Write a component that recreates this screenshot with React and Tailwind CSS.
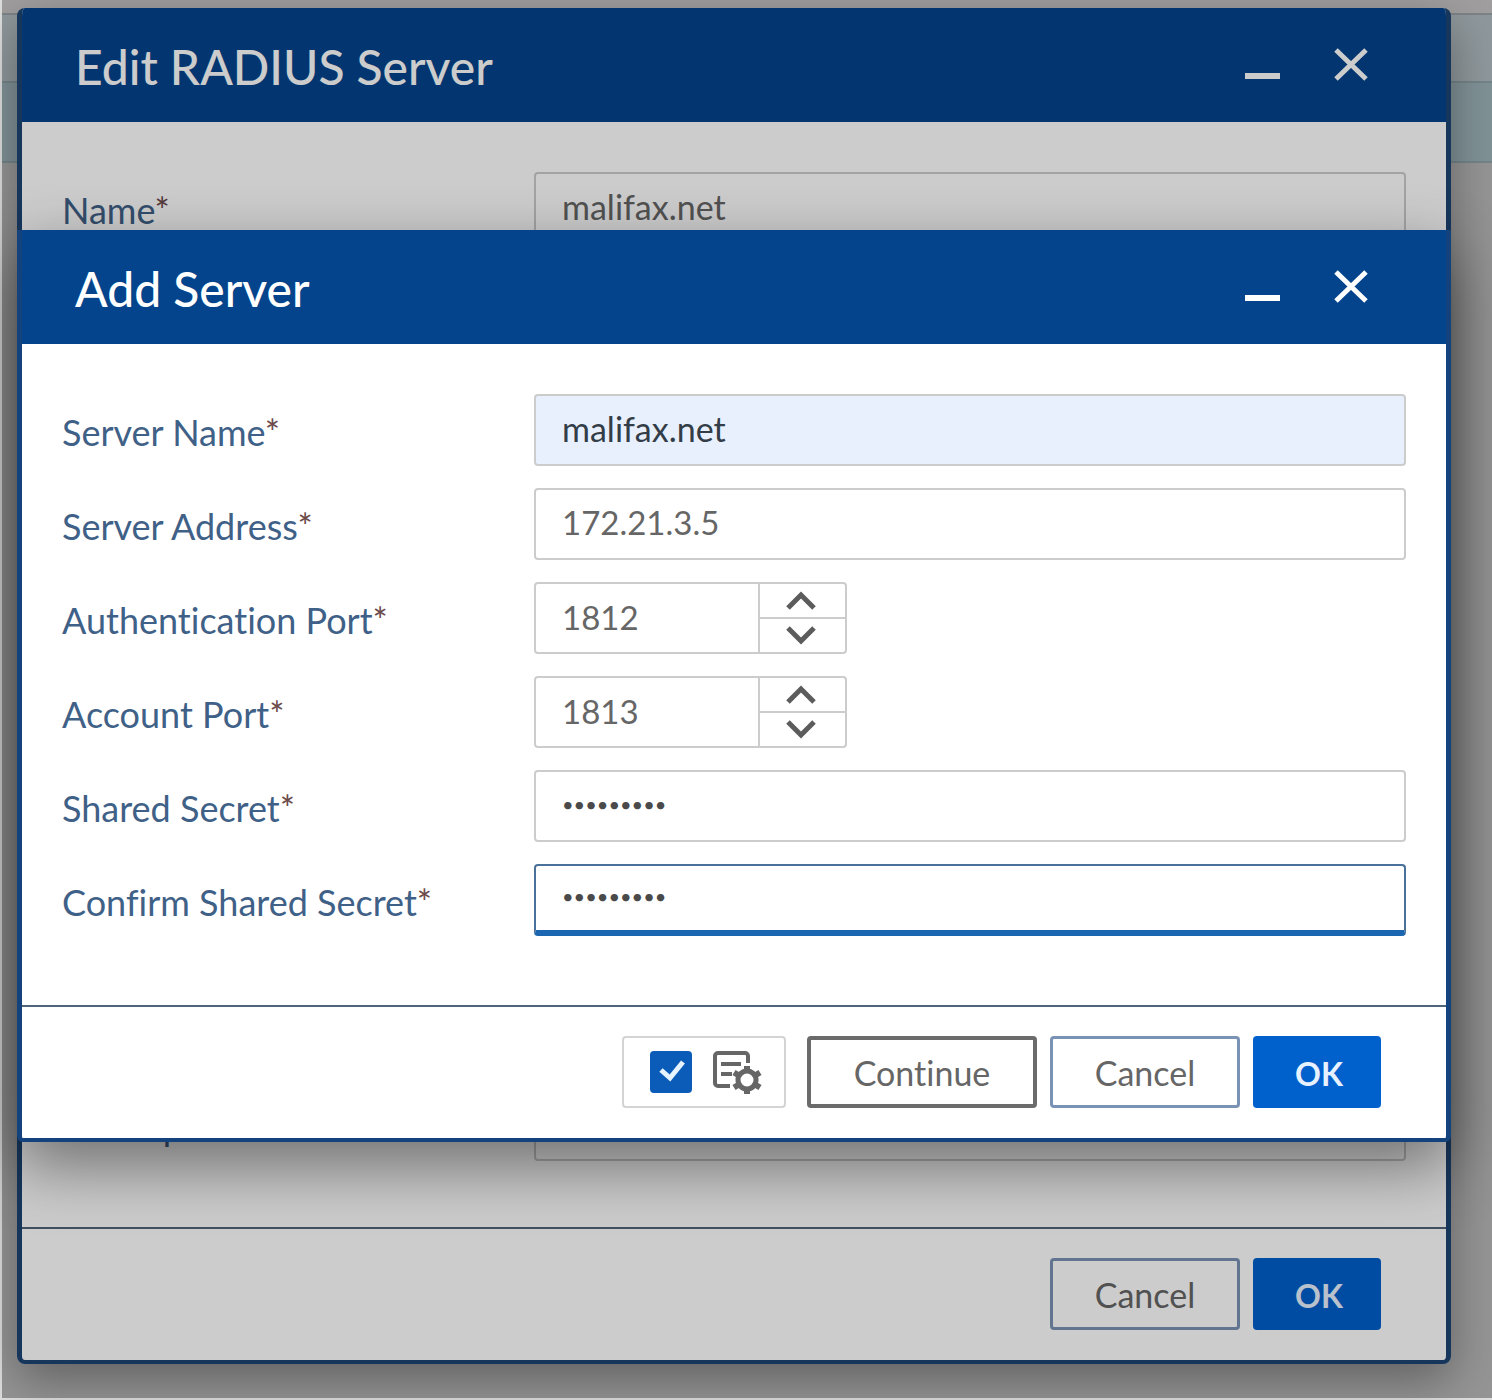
import React, { useState } from 'react';

const HeaderBar = ({ title, onClose }) => (
    <header className="flex h-[114px] shrink-0 items-center justify-between bg-[#04448c] pr-[76px] pl-[53px] text-white">
        <h2 className="pt-1 text-[48px] leading-[56px] font-medium">{title}</h2>
        <div className="flex items-center gap-[50px]">
            <button type="button" aria-label="Minimize">
                <svg viewBox="0 0 38 38" className="h-[38px] w-[38px]" fill="none" stroke="currentColor" strokeWidth="6">
                    <path d="M1 30h35" />
                </svg>
            </button>
            <button type="button" aria-label="Close" onClick={onClose}>
                <svg viewBox="0 0 38 38" className="h-[38px] w-[38px]" fill="none" stroke="currentColor" strokeWidth="5">
                    <path d="M4 4l30 29M34 4L4 33" />
                </svg>
            </button>
        </div>
    </header>
);

const Field = ({ id, label, children }) => (
    <div className="flex h-[72px] items-center">
        <label htmlFor={id} className="w-[472px] shrink-0 pt-1 text-[36px] leading-[44px] text-[#3f6187]">
            {label}<span className="text-[#6b4a4a]">*</span>
        </label>
        {children}
    </div>
);

const inputBase = 'h-[72px] min-w-0 flex-1 rounded-[4px] border-2 px-[26px] pb-1 outline-none';

const TextField = ({ id, label, value, type = 'text', className = 'border-[#cccccc] bg-white text-[34px] text-[#666666]' }) => (
    <Field id={id} label={label}>
        <input id={id} type={type} defaultValue={value} className={`${inputBase} ${className}`} />
    </Field>
);

const PortField = ({ id, label, initial }) => {
    const [port, setPort] = useState(initial);

    return (
        <Field id={id} label={label}>
            <div className="flex h-[72px] w-[313px] rounded-[4px] border-2 border-[#cccccc] bg-white">
                <input
                    id={id}
                    type="text"
                    inputMode="numeric"
                    value={port}
                    onChange={(e) => setPort(Number(e.target.value) || 0)}
                    className="min-w-0 flex-1 px-[26px] pb-px text-[33px] text-[#666666] outline-none"
                />
                <div className="flex w-[87px] flex-col divide-y-2 divide-[#cccccc] border-l-2 border-[#cccccc] text-[#5c5c5c]">
                    <button type="button" aria-label="Increase" onClick={() => setPort(port + 1)} className="flex flex-1 items-center justify-center pr-1">
                        <svg viewBox="0 0 32 20" className="h-[20px] w-[32px]" fill="none" stroke="currentColor" strokeWidth="5">
                            <path d="M3 17L16 4l13 13" />
                        </svg>
                    </button>
                    <button type="button" aria-label="Decrease" onClick={() => setPort(port - 1)} className="flex flex-1 items-center justify-center pr-1">
                        <svg viewBox="0 0 32 20" className="h-[20px] w-[32px]" fill="none" stroke="currentColor" strokeWidth="5">
                            <path d="M3 2l13 13L29 2" />
                        </svg>
                    </button>
                </div>
            </div>
        </Field>
    );
};

const ContinueOption = () => (
    <div className="mr-2 flex h-[72px] w-[164px] items-center justify-center gap-[20px] rounded-[4px] border-2 border-[#d4d4d4] pl-1">
        <span className="relative h-[42px] w-[42px]">
            <input
                type="checkbox"
                defaultChecked
                aria-label="Keep settings"
                className="peer h-[42px] w-[42px] appearance-none rounded-[4px] border-2 border-[#0a5cb8] checked:bg-[#0a5cb8]"
            />
            <svg viewBox="0 0 42 42" className="pointer-events-none absolute inset-0 hidden text-[#e6f4ff] peer-checked:block" fill="none" stroke="currentColor" strokeWidth="5">
                <path d="M11 19l9 8L33 11" />
            </svg>
        </span>
        {/* Form sheet with a gear in its corner */}
        <svg viewBox="0 0 50 46" className="h-[46px] w-[50px] text-[#666666]" fill="none" stroke="currentColor" strokeWidth="4">
            <path d="M18 37H6a3 3 0 0 1-3-3V7a3 3 0 0 1 3-3h27a3 3 0 0 1 3 3v7" />
            <path d="M9 15h20M9 25h11" />
            <circle cx="35" cy="31" r="9" strokeWidth="5" />
            <path strokeWidth="6" d="M35 22v-5M35 40v5M43 26.500l5-3M27 35.500l-5 3M43 35.500l5 3M27 26.500l-5-3" />
        </svg>
    </div>
);

const Footer = ({ children }) => (
    <footer className="flex shrink-0 justify-end gap-[13px] border-t-2 border-[#50647a] pt-[29px] pr-[65px] pb-[30px] text-[34px]">
        {children}
        <button type="button" className="h-[72px] w-[190px] rounded-[4px] border-[3px] border-[#7a93b5] text-[#666666]">
            Cancel
        </button>
        <button type="button" className="h-[72px] w-[128px] rounded-[4px] bg-[#0060cc] pt-1 pl-1 text-[32px] font-bold text-[#e6f2ff]">
            OK
        </button>
    </footer>
);

const EditRadiusDialog = () => (
    <section className="relative flex flex-1 flex-col overflow-hidden rounded-[8px] border-x-[5px] border-b-4 border-[#1c4474] bg-white">
        <HeaderBar title="Edit RADIUS Server" />
        <div className="flex flex-1 flex-col justify-between px-[40px] pt-[50px] pb-[66px]">
            <TextField id="radius-name" label="Name" value="malifax.net" />
            <TextField id="radius-description" label="Description" value="" />
        </div>
        <Footer />
    </section>
);

const AddServerDialog = ({ onClose }) => (
    <section className="flex flex-col rounded-b-[6px] border-x-[5px] border-b-4 border-[#14427c] bg-white shadow-[0_24px_64px_0_rgba(0,0,0,0.45)]">
        <HeaderBar title="Add Server" onClose={onClose} />
        <div className="flex flex-col gap-[22px] px-[40px] pt-[50px] pb-[69px]">
            <TextField
                id="server-name"
                label="Server Name"
                value="malifax.net"
                className="border-[#cccccc] bg-[#e8f0fe] text-[34px] text-[#333d47]"
            />
            <TextField
                id="server-address"
                label="Server Address"
                value="172.21.3.5"
                className="border-[#cccccc] bg-white text-[33px] text-[#666666]"
            />
            <PortField id="auth-port" label="Authentication Port" initial={1812} />
            <PortField id="account-port" label="Account Port" initial={1813} />
            <TextField
                id="secret"
                label="Shared Secret"
                type="password"
                value="secret123"
                className="border-[#cccccc] bg-white text-[20px] text-[#4a4a4a]"
            />
            <TextField
                id="confirm-secret"
                label="Confirm Shared Secret"
                type="password"
                value="secret123"
                className="border-b-[6px] border-[#4a7199] border-b-[#1a66b0] bg-white text-[20px] text-[#4a4a4a]"
            />
        </div>
        <Footer>
            <ContinueOption />
            <button type="button" className="h-[72px] w-[230px] rounded-[4px] border-4 border-[#6b6b6b] text-[#666666]">
                Continue
            </button>
        </Footer>
    </section>
);

const App = () => {
    const [adding, setAdding] = useState(true);

    return (
        <div className="relative flex min-h-screen flex-col border-b-2 border-l-2 border-[#dedede] bg-[#959595] font-['Lato','Noto_Sans',sans-serif] [font-variant-ligatures:none]">
            {/* Page rows behind the dialogs */}
            <div className="absolute inset-x-0 top-0">
                <div className="h-[13px] bg-[#a09e9f]" />
                <div className="h-[68px] border-t-2 border-[#7c8386] bg-[#8f989c]" />
                <div className="h-[82px] border-y-2 border-[#738589] bg-[#819297]" />
            </div>

            <div className="relative mt-[8px] mr-[41px] mb-[34px] ml-[15px] flex flex-1 flex-col rounded-[8px] shadow-[0_16px_48px_0_rgba(0,0,0,0.35)]">
                <EditRadiusDialog />
                {adding && (
                    <>
                        <div className="absolute inset-0 rounded-[8px] bg-black/20" />
                        <div className="absolute inset-x-0 top-[222px]">
                            <AddServerDialog onClose={() => setAdding(false)} />
                        </div>
                    </>
                )}
            </div>
        </div>
    );
};

export default App;
